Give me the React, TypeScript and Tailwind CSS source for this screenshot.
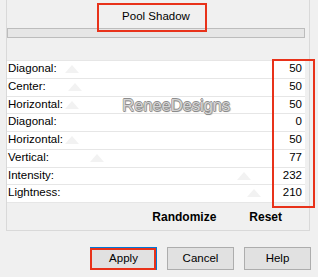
const rows = [
  { label: "Diagonal:", value: 50, thumb: 58 },
  { label: "Center:", value: 50, thumb: 61 },
  { label: "Horizontal:", value: 50, thumb: 58 },
  { label: "Diagonal:", value: 0, thumb: -40 },
  { label: "Horizontal:", value: 50, thumb: 58 },
  { label: "Vertical:", value: 77, thumb: 83 },
  { label: "Intensity:", value: 232, thumb: 230 },
  { label: "Lightness:", value: 210, thumb: 240 },
];

function Row({ label, value, thumb }: { label: string; value: number; thumb: number }) {
  return (
    <div className="relative flex h-[17.75px] items-start justify-between border-t border-[#e6e6e6] bg-white pl-[1px] pr-[3px] leading-[14px]">
      {thumb > 0 ? (
        <span
          className="absolute top-[4px] h-0 w-0 border-x-[7px] border-b-[8px] border-x-transparent border-b-[#f2f2f2]"
          style={{ left: thumb }}
        />
      ) : null}
      <span className="relative">{label}</span>
      <span className="relative">{value}</span>
    </div>
  );
}

export default function App() {
  return (
    <div
      className="relative h-[277px] w-[318px] overflow-hidden bg-[#f0f0f0] text-[11.5px] text-black"
      style={{ fontFamily: '"Liberation Sans", Arial, sans-serif' }}
    >
      <div className="ml-[6px] flex h-[231px] w-[304px] flex-col border-x border-b border-[#d9d9d9] pr-[4px]">
        <div className="h-[60px] shrink-0">
          <div className="pt-[9px] text-center leading-[14px]">Pool Shadow</div>
          <div className="mt-[5px] h-[10px] border border-[#bcbcbc] bg-[#e6e6e6]" />
        </div>
        <div className="flex flex-col">
          {rows.map((r, i) => (
            <Row key={i} {...r} />
          ))}
        </div>
        <div className="flex flex-1 items-center justify-end gap-[33px] border-t border-[#e6e6e6] pr-[23px] text-[12px] font-bold">
          <span>Randomize</span>
          <span>Reset</span>
        </div>
      </div>

      <div className="mt-[16px] flex justify-end gap-[10px] pr-[7px]">
        <button className="h-[23px] w-[67px] border border-[#0078d7] bg-[#e1e1e1] shadow-[inset_0_0_0_1px_#0078d7]">
          Apply
        </button>
        <button className="h-[23px] w-[67px] border border-[#adadad] bg-[#e1e1e1]">Cancel</button>
        <button className="h-[23px] w-[67px] border border-[#adadad] bg-[#e1e1e1]">Help</button>
      </div>

      <div
        className="absolute left-[122px] top-[93px] text-[17px] tracking-[-0.3px] text-[#d4d4d4]"
        style={{
          textShadow:
            "0.6px 0 0 #8c8c8c, -0.6px 0 0 #8c8c8c, 0 0.6px 0 #8c8c8c, 0 -0.6px 0 #8c8c8c, 1px 1px 1px #b0b0b0",
        }}
      >
        ReneeDesigns
      </div>

      <div className="absolute left-[97px] top-[3px] h-[29px] w-[110px] border-2 border-[#e8321a]" />
      <div className="absolute left-[272px] top-[59px] h-[149px] w-[43px] border-2 border-[#e8321a]" />
      <div className="absolute left-[90px] top-[248px] h-[22px] w-[66px] border-2 border-[#e8321a]" />
    </div>
  );
}
